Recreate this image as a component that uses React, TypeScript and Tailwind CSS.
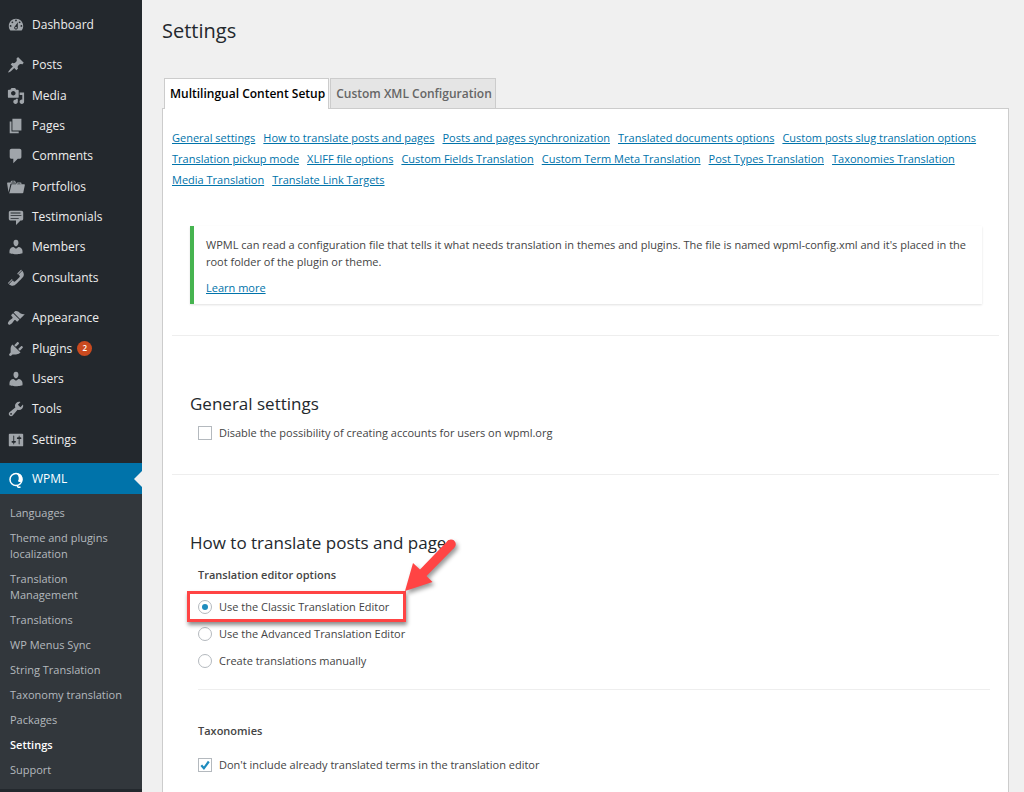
import type { ReactNode } from "react";
import clsx from "clsx";

interface MenuEntry {
  label: string;
  icon: string;
  count?: number;
}

const ICONS = {
  dashboard:
    "M3.76 16h12.48c1.1-1.37 1.76-3.11 1.76-5 0-4.42-3.58-8-8-8s-8 3.58-8 8c0 1.89.66 3.63 1.76 5zM10 4c.55 0 1 .45 1 1s-.45 1-1 1-1-.45-1-1 .45-1 1-1zM6 6c.55 0 1 .45 1 1s-.45 1-1 1-1-.45-1-1 .45-1 1-1zm8 0c.55 0 1 .45 1 1s-.45 1-1 1-1-.45-1-1 .45-1 1-1zm-5.37 5.55L12 7v6c0 1.1-.9 2-2 2s-2-.9-2-2c0-.57.24-1.08.63-1.45zM4 10c.55 0 1 .45 1 1s-.45 1-1 1-1-.45-1-1 .45-1 1-1zm12 0c.55 0 1 .45 1 1s-.45 1-1 1-1-.45-1-1 .45-1 1-1zm-5 3c0-.55-.45-1-1-1s-1 .45-1 1 .45 1 1 1 1-.45 1-1z",
  post: "M10.44 3.02l1.82-1.82 6.36 6.35-1.83 1.82c-1.05-.68-2.48-.57-3.41.36l-.75.75c-.92.93-1.04 2.35-.35 3.41l-1.83 1.82-2.41-2.41-2.8 2.79c-.42.42-3.38 2.71-3.8 2.29s1.86-3.39 2.28-3.81l2.79-2.79L4.1 9.36l1.83-1.82c1.05.69 2.48.57 3.4-.36l.75-.75c.93-.92 1.05-2.35.36-3.41z",
  media:
    "M13 11V4c0-.55-.45-1-1-1h-1.67L9 1H5L3.67 3H2c-.55 0-1 .45-1 1v7c0 .55.45 1 1 1h10c.55 0 1-.45 1-1zM7 4.5c1.38 0 2.5 1.12 2.5 2.5S8.38 9.5 7 9.5 4.5 8.38 4.5 7 5.62 4.5 7 4.5zM14 6h5v10.5c0 1.38-1.12 2.5-2.5 2.5S14 17.88 14 16.5s1.12-2.5 2.5-2.5c.17 0 .34.02.5.05V9h-3V6zm-4 8.05V13h2v3.5c0 1.38-1.12 2.5-2.5 2.5S7 17.88 7 16.5 8.12 14 9.5 14c.17 0 .34.02.5.05z",
  page: "M6 15V2h10v13H6zm-1 1h8v2H3V5h2v11z",
  comments:
    "M5 2h9c1.1 0 2 .9 2 2v7c0 1.1-.9 2-2 2h-2l-5 5v-5H5c-1.1 0-2-.9-2-2V4c0-1.1.9-2 2-2z",
  portfolio:
    "M4 5H.78c-.37 0-.74.32-.69.84l1.56 9.99S3.5 8.47 3.86 6.7c.11-.53.61-.7.98-.7H10s-.7-2.08-.77-2.31C9.11 3.25 8.89 3 8.45 3H5.14c-.36 0-.7.23-.8.64C4.25 4.04 4 5 4 5zm4.88 0h-4s.42-1 .87-1h2.13c.48 0 1 1 1 1zM2.67 16.25c-.31.47-.76.75-1.26.75h15.73c.54 0 .92-.31 1.03-.83.44-2.19 1.68-8.44 1.68-8.44.07-.5-.3-.73-.62-.73H16V5.53c0-.16-.26-.53-.66-.53h-3.76c-.52 0-.87.58-.87.58L10 7H5.59c-.32 0-.63.19-.69.5 0 0-1.59 6.7-1.72 7.33-.07.37-.22.99-.51 1.42zM15.38 7H11s.58-1 1.13-1h2.29c.71 0 .96 1 .96 1z",
  testimonial:
    "M4 3h12c.55 0 1.02.2 1.41.59S18 4.45 18 5v7c0 .55-.2 1.02-.59 1.41S16.55 14 16 14h-1l-5 5v-5H4c-.55 0-1.02-.2-1.41-.59S2 12.55 2 12V5c0-.55.2-1.02.59-1.41S3.45 3 4 3zm11 2H4v1h11V5zm1 3H4v1h12V8zm-3 3H4v1h9v-1z",
  users:
    "M10 9.25c-2.27 0-2.73-3.44-2.73-3.44C7 4.02 7.82 2 9.97 2c2.16 0 2.98 2.02 2.71 3.81 0 0-.41 3.44-2.68 3.44zm0 2.57L12.72 10c2.39 0 4.52 2.33 4.52 4.53v2.49s-3.65 1.13-7.24 1.13c-3.65 0-7.24-1.13-7.24-1.13v-2.49c0-2.25 1.94-4.48 4.47-4.48z",
  phone:
    "M12.06 6l-.21-.2c-.52-.54-.43-.79.08-1.3l2.72-2.75c.81-.82.96-1.21 1.73-.48l.21.2zm.53.45l4.4-4.4c.7.94 2.34 3.47 1.53 5.34-.73 1.67-1.09 1.75-2 3-1.85 2.11-4.18 4.37-6 6.07-1.26.91-1.31 1.33-3 2-1.8.71-4.4-.89-5.38-1.56l4.4-4.4 1.18 1.62c.34.46 1.2-.06 1.8-.66 1.04-1.05 3.18-3.18 4-4.07.59-.59 1.12-1.45.66-1.8zM1.57 16.5l-.21-.21c-.68-.74-.29-.9.52-1.7l2.74-2.72c.51-.49.75-.6 1.27-.11l.2.21z",
  appearance:
    "M14.48 11.06L7.41 3.99l1.5-1.5c.5-.56 2.3-.47 3.51.32 1.21.8 1.43 1.28 2.91 2.1 1.18.64 2.45 1.26 4.45.85zm-.71.71L6.7 4.7 4.93 6.47c-.39.39-.39 1.02 0 1.41l1.06 1.06c.39.39.39 1.03 0 1.42-.6.6-1.43 1.11-2.21 1.69-.35.26-.7.53-1.01.84C1.43 14.23.4 16.08 1.4 17.07c.99 1 2.84-.03 4.18-1.36.31-.31.58-.66.85-1.02.57-.78 1.08-1.61 1.69-2.21.39-.39 1.02-.39 1.41 0l1.06 1.06c.39.39 1.02.39 1.41 0z",
  plugins:
    "M13.11 4.36L9.87 7.6 8 5.73l3.24-3.24c.35-.34 1.05-.2 1.56.32.52.51.66 1.21.31 1.55zm-8 1.77l.91-1.12 9.01 9.01-1.19.84c-.71.71-2.63 1.16-3.82 1.16H6.14L4.9 17.26c-.59.59-1.54.59-2.12 0-.59-.58-.59-1.53 0-2.12l1.24-1.24v-3.88c0-1.13.4-3.19 1.09-3.89zm7.26 3.97l3.24-3.24c.34-.35 1.04-.21 1.55.31.52.51.66 1.21.31 1.55l-3.24 3.25z",
  tools:
    "M16.68 9.77c-1.34 1.34-3.3 1.67-4.95.99l-5.41 6.52c-.99.99-2.59.99-3.58 0s-.99-2.59 0-3.57l6.52-5.42c-.68-1.65-.35-3.61.99-4.95 1.28-1.28 3.12-1.62 4.72-1.06l-2.89 2.89 2.82 2.82 2.86-2.87c.53 1.58.18 3.39-1.08 4.65zM3.81 16.21c.4.39 1.04.39 1.43 0 .4-.4.4-1.04 0-1.43-.39-.4-1.03-.4-1.43 0-.39.39-.39 1.03 0 1.43z",
  settings:
    "M18 16V4c0-.55-.45-1-1-1H3c-.55 0-1 .45-1 1v12c0 .55.45 1 1 1h14c.55 0 1-.45 1-1zM8 11h1c.55 0 1 .45 1 1s-.45 1-1 1H8v1.5c0 .28-.22.5-.5.5s-.5-.22-.5-.5V13H6c-.55 0-1-.45-1-1s.45-1 1-1h1V5.5c0-.28.22-.5.5-.5s.5.22.5.5V11zm5-2h-1c-.55 0-1-.45-1-1s.45-1 1-1h1V5.5c0-.28.22-.5.5-.5s.5.22.5.5V7h1c.55 0 1 .45 1 1s-.45 1-1 1h-1v5.5c0 .28-.22.5-.5.5s-.5-.22-.5-.5V9z",
};

const CONTENT_MENU: MenuEntry[] = [
  { label: "Posts", icon: ICONS.post },
  { label: "Media", icon: ICONS.media },
  { label: "Pages", icon: ICONS.page },
  { label: "Comments", icon: ICONS.comments },
  { label: "Portfolios", icon: ICONS.portfolio },
  { label: "Testimonials", icon: ICONS.testimonial },
  { label: "Members", icon: ICONS.users },
  { label: "Consultants", icon: ICONS.phone },
];

const ADMIN_MENU: MenuEntry[] = [
  { label: "Appearance", icon: ICONS.appearance },
  { label: "Plugins", icon: ICONS.plugins, count: 2 },
  { label: "Users", icon: ICONS.users },
  { label: "Tools", icon: ICONS.tools },
  { label: "Settings", icon: ICONS.settings },
];

const WPML_MENU = [
  "Languages",
  "Theme and plugins localization",
  "Translation Management",
  "Translations",
  "WP Menus Sync",
  "String Translation",
  "Taxonomy translation",
  "Packages",
  "Settings",
  "Support",
];

const SECTION_LINKS = [
  "General settings",
  "How to translate posts and pages",
  "Posts and pages synchronization",
  "Translated documents options",
  "Custom posts slug translation options",
  "Translation pickup mode",
  "XLIFF file options",
  "Custom Fields Translation",
  "Custom Term Meta Translation",
  "Post Types Translation",
  "Taxonomies Translation",
  "Media Translation",
  "Translate Link Targets",
];

function MenuItem({ label, icon, count }: MenuEntry) {
  return (
    <li className="flex">
      <a href="#" className="flex flex-1 items-center gap-[7px] pl-[7px] text-xs text-[#eee]">
        <svg viewBox="0 0 20 20" className="size-[18px] fill-[#a0a5aa]" aria-hidden="true">
          <path d={icon} />
        </svg>
        {label}
        {count && (
          <span className="-ml-0.5 flex size-[15px] items-center justify-center rounded-full bg-[#ca4a1f] text-[8px] font-semibold text-white">
            {count}
          </span>
        )}
      </a>
    </li>
  );
}

function Sidebar() {
  return (
    <nav className="flex w-[142px] shrink-0 flex-col bg-[#23282d] pt-2.5">
      <ul className="grid h-[30px]">
        <MenuItem label="Dashboard" icon={ICONS.dashboard} />
      </ul>
      <ul className="mt-2.5 grid h-[243px] auto-rows-fr">
        {CONTENT_MENU.map((item) => (
          <MenuItem key={item.label} {...item} />
        ))}
      </ul>
      <ul className="mt-2.5 grid h-[152px] auto-rows-fr">
        {ADMIN_MENU.map((item) => (
          <MenuItem key={item.label} {...item} />
        ))}
      </ul>
      <a
        href="#"
        className="relative mt-2 flex h-[31px] items-center gap-[7px] bg-[#0073aa] pl-[7px] text-xs text-white"
      >
        <svg viewBox="0 0 18 18" className="size-[18px]" fill="none" stroke="#fff" aria-hidden="true">
          <circle cx="9" cy="9.500" r="6" strokeWidth="1.5" />
          <path d="M10 4c3.500-.8 6 2 5.300 6.500-1 2-3.800 1.800-4.300.5 1.300-2 1-4.500-1-7z" fill="#fff" stroke="none" />
          <path d="M10.500 15c-.5 2 1 3 3 1.800" strokeWidth="1.500" />
        </svg>
        WPML
        <span className="absolute right-0 border-y-8 border-r-8 border-y-transparent border-r-[#f0f0f0]" />
      </a>
      <ul className="bg-[#32373c] pt-[7px] pb-1.5 text-[11px] leading-4 text-[#b4b9be]">
        {WPML_MENU.map((label) => (
          <li key={label} className="pt-1 pr-5 pb-[5px] pl-2.5">
            <a href="#" className={clsx(label === "Settings" && "font-semibold text-white")}>
              {label}
            </a>
          </li>
        ))}
      </ul>
    </nav>
  );
}

interface ChoiceProps {
  type: "radio" | "checkbox";
  label: string;
  name?: string;
  defaultChecked?: boolean;
}

function Choice({ type, label, name, defaultChecked }: ChoiceProps) {
  return (
    <label className="flex items-center gap-[7px] leading-[17px]">
      <span className="grid place-items-center">
        <input
          type={type}
          name={name}
          defaultChecked={defaultChecked}
          className={clsx(
            "peer col-start-1 row-start-1 size-[14px] appearance-none border border-[#b4b9be] bg-white",
            type === "radio" && "rounded-full",
          )}
        />
        {type === "radio" ? (
          <span className="invisible col-start-1 row-start-1 size-1.5 rounded-full bg-[#1e8cbe] peer-checked:visible" />
        ) : (
          <svg
            viewBox="0 0 14 14"
            className="pointer-events-none invisible col-start-1 row-start-1 size-[14px] peer-checked:visible"
            aria-hidden="true"
          >
            <path d="M3.300 7.300l2.600 3L10.800 3.500" fill="none" stroke="#1e8cbe" strokeWidth="2.200" />
          </svg>
        )}
      </span>
      {label}
    </label>
  );
}

function Callout({ children }: { children: ReactNode }) {
  return (
    <div className="relative -my-[7px] -ml-[11px] self-start border-[3px] border-[#f44] py-1 pr-3.5 pl-2 shadow-[1px_3px_4px_rgba(0,0,0,0.45)]">
      {children}
      <svg
        viewBox="0 0 60 60"
        className="absolute -top-[60px] -right-[59px] size-[60px] drop-shadow-[2px_3px_2px_rgba(0,0,0,0.4)]"
        aria-hidden="true"
      >
        <path d="M3 57L11 29l7 6.500L45.500 7a4.700 4.700 0 0 1 7 6.500L24.500 42l6 6z" fill="#f44" />
      </svg>
    </div>
  );
}

export default function App() {
  return (
    <div className="flex min-h-screen bg-[#f0f0f0] font-['Open_Sans',sans-serif] text-[11px] text-[#444]">
      <Sidebar />
      <main className="flex min-w-0 flex-1 flex-col pr-[15px] pl-5">
        <h1 className="mt-[17px] text-xl text-[#23282d]">Settings</h1>

        <div className="z-10 mt-[33px] -mb-px flex gap-px pl-0.5 text-xs font-semibold">
          <a href="#" className="h-[31px] border border-b-0 border-[#ccc] bg-white pr-[3px] pl-[5px] leading-[30px] text-black">
            Multilingual Content Setup
          </a>
          <a href="#" className="h-[31px] border border-[#ccc] bg-[#e5e5e5] pr-[3px] pl-[5px] leading-[30px] text-[#666]">
            Custom XML Configuration
          </a>
        </div>

        <div className="flex-1 border border-b-0 border-[#ccc] bg-white px-[9px] pt-[18px]">
          <nav className="flex flex-wrap gap-x-2 leading-[21px]">
            {SECTION_LINKS.map((label) => (
              <a key={label} href="#" className="text-[#0073aa] underline">
                {label}
              </a>
            ))}
          </nav>

          <div className="mt-9 mr-[17px] ml-[18px] border-l-4 border-[#46b450] px-3 pt-[10px] pb-2 leading-[17px] shadow-[0_1px_2px_rgba(0,0,0,0.12)]">
            <p>
              WPML can read a configuration file that tells it what needs translation in themes and plugins. The file is
              named wpml-config.xml and it's placed in the root folder of the plugin or theme.
            </p>
            <a href="#" className="mt-[9px] inline-block text-[#0073aa] underline">
              Learn more
            </a>
          </div>

          <section className="mt-[31px] border-t border-[#eee] px-[18px] pt-[56px] pb-[33px]">
            <h2 className="text-[17px] leading-6 text-[#23282d]">General settings</h2>
            <div className="mt-2 pl-2">
              <Choice type="checkbox" label="Disable the possibility of creating accounts for users on wpml.org" />
            </div>
          </section>

          <section className="border-t border-[#eee] pt-[56px] pr-[9px] pl-[18px]">
            <h2 className="text-[17px] leading-6 text-[#23282d]">How to translate posts and pages</h2>
            <fieldset className="mt-[11px] ml-2 flex flex-col gap-2.5 border-b border-[#eee] pb-5">
              <legend className="mb-[15px] leading-[17px] font-semibold">Translation editor options</legend>
              <Callout>
                <Choice type="radio" name="editor" label="Use the Classic Translation Editor" defaultChecked />
              </Callout>
              <Choice type="radio" name="editor" label="Use the Advanced Translation Editor" />
              <Choice type="radio" name="editor" label="Create translations manually" />
            </fieldset>

            <fieldset className="mt-8 ml-2">
              <legend className="mb-[17px] leading-[17px] font-semibold">Taxonomies</legend>
              <Choice type="checkbox" label="Don't include already translated terms in the translation editor" defaultChecked />
            </fieldset>
          </section>
        </div>
      </main>
    </div>
  );
}
